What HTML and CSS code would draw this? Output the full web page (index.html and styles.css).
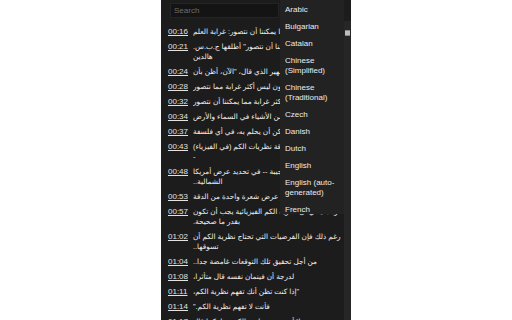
FILE: index.html
```html
<!DOCTYPE html>
<html>
<head>
<meta charset="utf-8">
<link rel="stylesheet" href="styles.css">
</head>
<body>
<div class="panel">
  <div class="main">
    <div class="search-row"><div class="search">Search</div></div>
    <div class="list">
      <div class="row"><span class="ts">00:16</span><div class="txt"><div dir="rtl">الكون أغرب مما يمكننا أن نتصور: غرابة العلم</div></div></div>
      <div class="row"><span class="ts">00:21</span><div class="txt"><div dir="rtl">"أغرب مما يمكننا أن نتصور" أطلقها ج.ب.س.</div><div dir="rtl">هالدين</div></div></div>
      <div class="row"><span class="ts">00:24</span><div class="txt"><div dir="rtl">مقولة العالم الشهير الذي قال، "الآن، أظن بأن</div></div></div>
      <div class="row"><span class="ts">00:28</span><div class="txt"><div dir="rtl">إن الكون ليس أكثر غرابة مما نتصور</div></div></div>
      <div class="row"><span class="ts">00:32</span><div class="txt"><div dir="rtl">بل هو أكثر غرابة مما يمكننا أن نتصور</div></div></div>
      <div class="row"><span class="ts">00:34</span><div class="txt"><div dir="rtl">هناك المزيد من الأشياء في السماء والأرض</div></div></div>
      <div class="row"><span class="ts">00:37</span><div class="txt"><div dir="rtl">أكثر مما يمكن أن يحلم به، في أي فلسفة</div></div></div>
      <div class="row"><span class="ts">00:43</span><div class="txt"><div dir="rtl">هذه هي دقة نظريات الكم (في الفيزياء)</div><div dir="rtl">-</div></div></div>
      <div class="row"><span class="ts">00:48</span><div class="txt"><div dir="rtl">دقة عجيبة -- في تحديد عرض أمريكا</div><div dir="rtl">الشمالية..</div></div></div>
      <div class="row"><span class="ts">00:53</span><div class="txt"><div dir="rtl">بقدر عرض شعرة واحدة من الدقة</div></div></div>
      <div class="row"><span class="ts">00:57</span><div class="txt"><div dir="rtl">وهذا يعني أن نظرية الكم الفيزيائية يجب أن تكون</div><div dir="rtl">بقدر ما صحيحة.</div></div></div>
      <div class="row"><span class="ts">01:02</span><div class="txt"><div dir="rtl">رغم ذلك فإن الفرضيات التي تحتاج نظرية الكم أن</div><div dir="rtl">تسوقها..</div></div></div>
      <div class="row"><span class="ts">01:04</span><div class="txt"><div dir="rtl">من أجل تحقيق تلك التوقعات غامضة جدا..</div></div></div>
      <div class="row"><span class="ts">01:08</span><div class="txt"><div dir="rtl">لدرجة أن فينمان نفسه قال متأثرا،</div></div></div>
      <div class="row"><span class="ts">01:11</span><div class="txt"><div dir="rtl">"إذا كنت تظن أنك تفهم نظرية الكم،</div></div></div>
      <div class="row"><span class="ts">01:14</span><div class="txt"><div dir="rtl">فأنت لا تفهم نظرية الكم."</div></div></div>
      <div class="row"><span class="ts">01:17</span><div class="txt"><div dir="rtl">لا أحد يفهم نظرية الكم حقا، كما قال</div></div></div>
    </div>
  </div>
  <div class="scrollbar">
    <div class="grip"></div>
  </div>
  <div class="dropdown">
    <div class="opt">Arabic</div>
    <div class="opt">Bulgarian</div>
    <div class="opt">Catalan</div>
    <div class="opt">Chinese (Simplified)</div>
    <div class="opt">Chinese (Traditional)</div>
    <div class="opt">Czech</div>
    <div class="opt">Danish</div>
    <div class="opt">Dutch</div>
    <div class="opt">English</div>
    <div class="opt">English (auto-generated)</div>
    <div class="opt">French</div>
  </div>
</div>
</body>
</html>
```
FILE: styles.css
```css
html, body {
  margin: 0;
  padding: 0;
  background: #ffffff;
}
body {
  font-family: "Liberation Sans", "DejaVu Sans", sans-serif;
  font-size: 8px;
}
.panel {
  margin-left: 161px;
  width: 190px;
  height: 320px;
  background: #1c1c1c;
  position: relative;
  overflow: hidden;
  display: flex;
}
.main {
  flex: 1;
  min-width: 0;
}
.search-row {
  padding: 3px 0 0 9px;
}
.search {
  width: 109px;
  height: 15px;
  box-sizing: border-box;
  background: #141414;
  border: 1px solid #242424;
  color: #6e6e6e;
  line-height: 13px;
  padding-left: 3px;
}
.list {
  padding: 9px 0 0 7px;
}
.row {
  display: flex;
  gap: 5px;
  line-height: 10px;
  margin-bottom: 5px;
}
.ts {
  flex: none;
  width: 20px;
  color: #e2e2e2;
  text-decoration: underline;
}
.txt {
  width: 148px;
  color: #efefef;
  font-size: 7.3px;
  white-space: nowrap;
  overflow: hidden;
}
.txt div {
  text-align: left;
}
.scrollbar {
  flex: none;
  width: 7px;
  margin-top: 21px;
  background: #262626;
}
.grip {
  width: 5px;
  height: 4px;
  margin: 9px 0 0 1px;
  background: #bdbdbd;
  border-top: 1px solid #888;
  border-bottom: 1px solid #888;
}
.dropdown {
  position: absolute;
  left: 119px;
  top: 0;
  width: 64px;
  height: 214px;
  padding-top: 1px;
  box-sizing: border-box;
  background: #222222;
  overflow: hidden;
}
.opt {
  padding: 3.5px 4px 3.5px 5px;
  line-height: 10px;
  color: #ececec;
}
```
